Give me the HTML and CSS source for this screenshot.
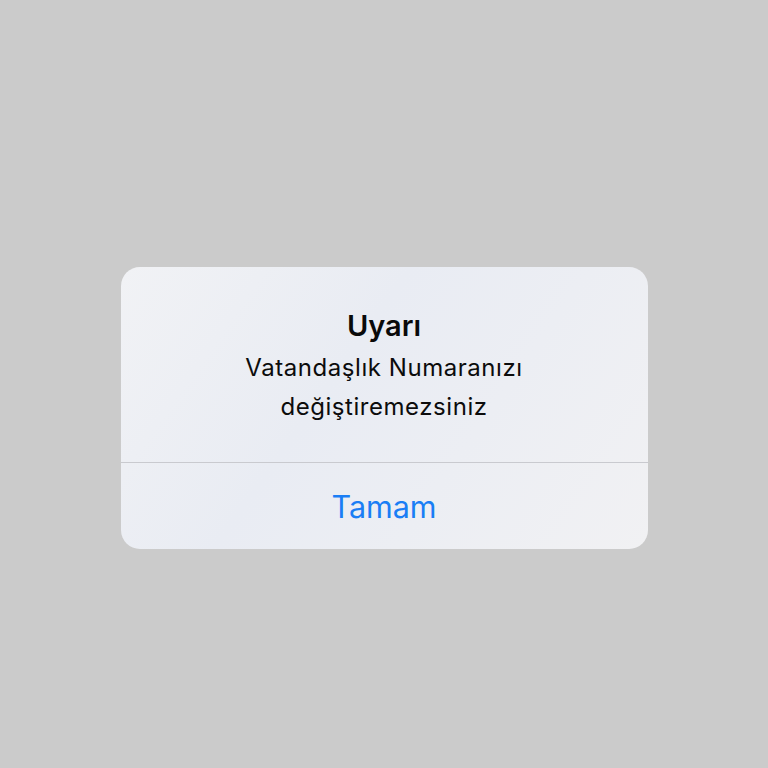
FILE: index.html
```html
<!DOCTYPE html>
<html lang="tr">
<head>
<meta charset="utf-8">
<link rel="stylesheet" href="styles.css">
</head>
<body>
<div class="screen">
  <div class="alert">
    <div class="alert-body">
      <div class="alert-title">Uyarı</div>
      <div class="alert-message">Vatandaşlık Numaranızı<br>değiştiremezsiniz</div>
    </div>
    <div class="alert-actions">
      <div class="alert-button">Tamam</div>
    </div>
  </div>
</div>
</body>
</html>
```
FILE: styles.css
```css
html, body {
  margin: 0;
  padding: 0;
  background: #cbcbcb;
}
.screen {
  width: 768px;
  height: 768px;
  display: flex;
  justify-content: center;
  align-items: flex-start;
  padding-top: 267px;
  box-sizing: border-box;
  font-family: Inter, "Noto Sans", sans-serif;
}
.alert {
  width: 527px;
  height: 282px;
  border-radius: 19px;
  background: linear-gradient(125deg, #f1f2f5 0%, #e9ecf3 40%, #eceef3 65%, #f1f1f3 100%);
  display: flex;
  flex-direction: column;
  overflow: hidden;
}
.alert-body {
  height: 196px;
  box-sizing: border-box;
  padding-top: 41px;
  text-align: center;
  border-bottom: 1px solid #c9cacf;
}
.alert-title {
  font-size: 29px;
  font-weight: 600;
  color: #0a0a0a;
  line-height: 36px;
}
.alert-message {
  font-size: 24px;
  letter-spacing: 0.55px;
  color: #0c0c0c;
  line-height: 39px;
  margin-top: 4px;
}
.alert-actions {
  flex: 1;
  display: flex;
  align-items: center;
  justify-content: center;
}
.alert-button {
  font-size: 30.5px;
  color: #1a7ef5;
  padding-top: 1px;
}
```
